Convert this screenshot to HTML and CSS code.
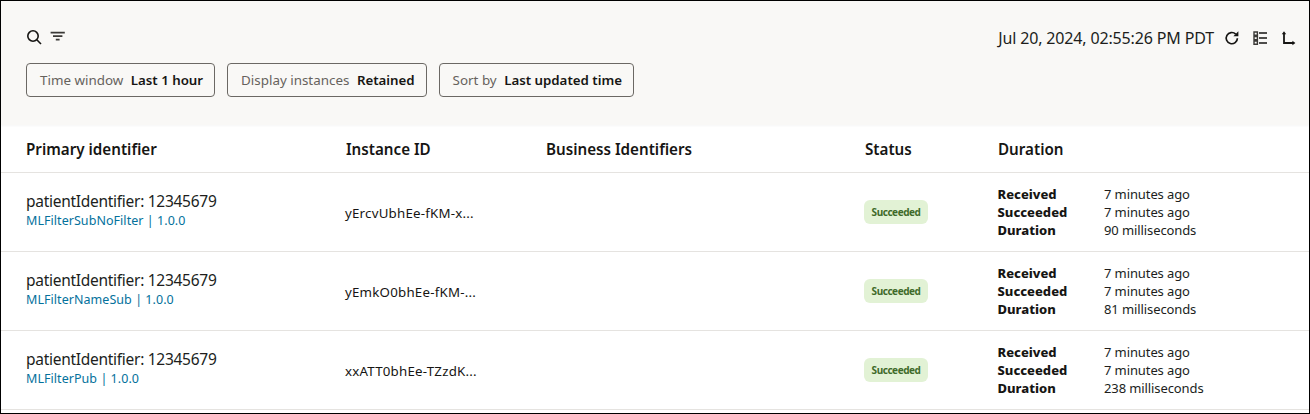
FILE: index.html
```html
<!DOCTYPE html>
<html lang="en">
<head>
<meta charset="utf-8">
<title>Instances</title>
<link rel="stylesheet" href="styles.css">
</head>
<body>
<div class="app">
  <header class="toolbar">
    <div class="toolbar-top">
      <div class="icons-left">
        <svg class="icon" viewBox="0 0 16 16" width="16" height="16"><circle cx="7" cy="7" r="5.2" fill="none" stroke="#161513" stroke-width="1.6"/><path d="M10.8 10.8L15 15" stroke="#161513" stroke-width="1.6" fill="none"/></svg>
        <svg class="icon" viewBox="0 0 16 16" width="16" height="16"><path d="M0.6 3.6h14.2M3 7.1h9.4M5.8 10.6h3.8" stroke="#3b3936" stroke-width="1.6" fill="none"/></svg>
      </div>
      <div class="icons-right">
        <span class="timestamp">Jul 20, 2024, 02:55:26 PM PDT</span>
        <svg class="icon refresh" viewBox="0 0 16 16" width="16" height="16"><path d="M13.4 8.2a5.6 5.6 0 1 1-1.7-4.1" fill="none" stroke="#161513" stroke-width="1.7"/><path d="M14.4 1.2v5h-5z" fill="#161513"/></svg>
        <svg class="icon list" viewBox="0 0 16 16" width="16" height="16"><path d="M2 2h3.4v3.2H2zM2 6.5h3.4v3.2H2zM2 11h3.4v3.2H2z" fill="none" stroke="#3b3936" stroke-width="1.4"/><path d="M7 3h8M7 8h8M7 13h8" stroke="#161513" stroke-width="1.5" fill="none"/></svg>
        <svg class="icon axes" viewBox="0 0 16 16" width="16" height="16"><path d="M4 3v10h9" fill="none" stroke="#161513" stroke-width="1.8"/><path d="M1.8 4.2L4 1.2l2.2 3zM12.4 10.8l3 2.2-3 2.2z" fill="#161513"/></svg>
      </div>
    </div>
    <div class="chips">
      <div class="chip"><span class="chip-label">Time window</span><span class="chip-value">Last 1 hour</span></div>
      <div class="chip"><span class="chip-label">Display instances</span><span class="chip-value">Retained</span></div>
      <div class="chip"><span class="chip-label">Sort by</span><span class="chip-value">Last updated time</span></div>
    </div>
  </header>

  <div class="row head">
    <div>Primary identifier</div>
    <div>Instance ID</div>
    <div>Business Identifiers</div>
    <div>Status</div>
    <div>Duration</div>
  </div>

  <div class="row item">
    <div class="primary-cell"><div class="primary">patientIdentifier: 12345679</div><div class="link">MLFilterSubNoFilter | 1.0.0</div></div>
    <div class="instance">yErcvUbhEe-fKM-x...</div>
    <div></div>
    <div class="pill-cell"><span class="pill">Succeeded</span></div>
    <dl class="times"><dt>Received</dt><dd>7 minutes ago</dd><dt>Succeeded</dt><dd>7 minutes ago</dd><dt>Duration</dt><dd>90 milliseconds</dd></dl>
  </div>

  <div class="row item">
    <div class="primary-cell"><div class="primary">patientIdentifier: 12345679</div><div class="link">MLFilterNameSub | 1.0.0</div></div>
    <div class="instance">yEmkO0bhEe-fKM-...</div>
    <div></div>
    <div class="pill-cell"><span class="pill">Succeeded</span></div>
    <dl class="times"><dt>Received</dt><dd>7 minutes ago</dd><dt>Succeeded</dt><dd>7 minutes ago</dd><dt>Duration</dt><dd>81 milliseconds</dd></dl>
  </div>

  <div class="row item">
    <div class="primary-cell"><div class="primary">patientIdentifier: 12345679</div><div class="link">MLFilterPub | 1.0.0</div></div>
    <div class="instance">xxATT0bhEe-TZzdK...</div>
    <div></div>
    <div class="pill-cell"><span class="pill">Succeeded</span></div>
    <dl class="times"><dt>Received</dt><dd>7 minutes ago</dd><dt>Succeeded</dt><dd>7 minutes ago</dd><dt>Duration</dt><dd>238 milliseconds</dd></dl>
  </div>
</div>
</body>
</html>
```
FILE: styles.css
```css
* { box-sizing: border-box; }
html, body { margin: 0; padding: 0; }
body {
  font-family: "Noto Sans", "Open Sans", sans-serif;
  color: #161513;
  background: #fff;
}
.app {
  width: 1310px;
  height: 414px;
  border: 1px solid #000;
  overflow: hidden;
  background: #fff;
}
.toolbar {
  height: 124px;
  background: #f9f8f6;
  padding: 26px 13px 0 25px;
  box-shadow: 0 1px 2px rgba(0,0,0,.04);
}
.toolbar-top {
  display: flex;
  justify-content: space-between;
  align-items: flex-start;
  height: 36px;
}
.icons-left { display: flex; gap: 8px; padding-top: 2px; }
.icons-right { display: flex; align-items: center; height: 21px; }
.icon { display: block; flex: none; }
.timestamp { font-size: 16px; letter-spacing: -0.15px; margin-right: 10px; color: #201e1c; }
.refresh { margin-right: 12px; }
.list { margin-right: 12px; }
.chips { display: flex; gap: 12px; }
.chip {
  height: 34px;
  display: flex;
  align-items: center;
  padding: 0 11px 0 13px;
  background: transparent;
  border: 1px solid #6b6864;
  border-radius: 4px;
  font-size: 13.4px;
  white-space: nowrap;
}
.chip-label { color: #66625d; margin-right: 7.5px; }
.chip-value { font-weight: 600; color: #161513; font-size: 13.3px; letter-spacing: -0.02px; }
.row {
  display: grid;
  grid-template-columns: 320px 200px 319px 133px 1fr;
  padding-left: 25px;
  border-bottom: 1px solid #e5e3e0;
  align-items: center;
}
.head {
  height: 48px;
  font-size: 15.2px;
  font-weight: 600;
}
.item { height: 79px; }
.primary-cell { margin-top: -3px; }
.primary { font-size: 15.5px; line-height: 19px; letter-spacing: -0.28px; color: #201e1c; }
.link { font-size: 12.5px; line-height: 18px; padding-top: 1px; letter-spacing: 0.05px; color: #04719c; }
.instance { font-size: 13.3px; color: #161513; letter-spacing: 0.22px; margin-left: -1px; margin-top: 2px; }
.pill-cell { margin-top: -2px; }
.pill {
  display: inline-flex;
  align-items: center;
  justify-content: center;
  width: 64px;
  height: 24px;
  margin-left: -1px;
  background: #e2f2d5;
  border-radius: 6px;
  color: #3f6b2a;
  font-size: 10px;
  font-weight: 700;
  letter-spacing: -0.45px;
}
.times {
  display: grid;
  grid-template-columns: 106px 1fr;
  margin: 0;
  font-size: 13px;
  line-height: 18px;
}
.times dt { font-weight: 800; margin-left: -0.5px; }
.times dd { margin: 0; color: #201e1c; letter-spacing: -0.1px; }
```
